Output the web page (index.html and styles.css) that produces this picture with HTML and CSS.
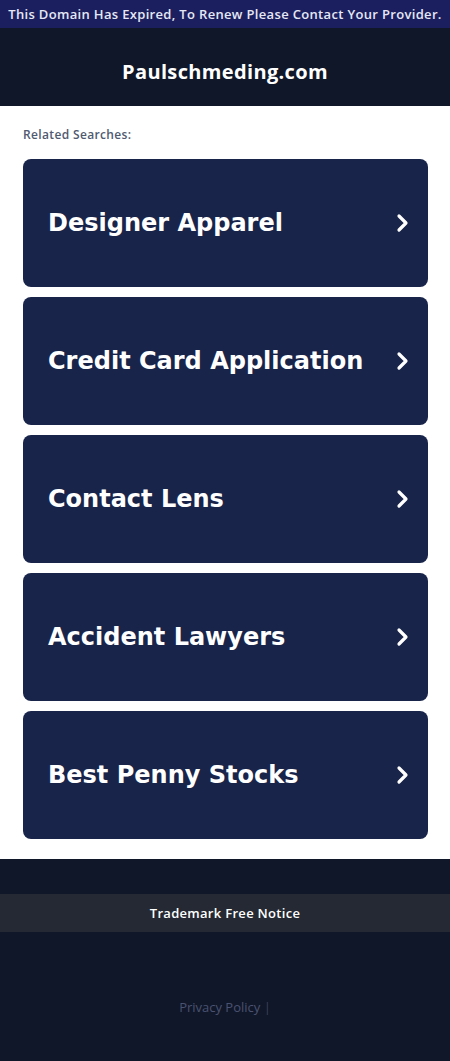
FILE: index.html
```html
<!DOCTYPE html>
<html>
<head>
    <title>Paulschmeding.com</title>
    <link rel="stylesheet" href="styles.css">
</head>
<body>
<div class="expired">This Domain Has Expired, To Renew Please Contact Your Provider.</div>
<div class="header">
    <h1>Paulschmeding.com</h1>
</div>
<div class="content">
    <p class="related">Related Searches:</p>
    <div class="links">
        <a class="link" href="#"><span>Designer Apparel</span><svg class="chev" viewBox="0 0 14 20"><path d="M3 3l7 7-7 7"/></svg></a>
        <a class="link" href="#"><span>Credit Card Application</span><svg class="chev" viewBox="0 0 14 20"><path d="M3 3l7 7-7 7"/></svg></a>
        <a class="link" href="#"><span>Contact Lens</span><svg class="chev" viewBox="0 0 14 20"><path d="M3 3l7 7-7 7"/></svg></a>
        <a class="link" href="#"><span>Accident Lawyers</span><svg class="chev" viewBox="0 0 14 20"><path d="M3 3l7 7-7 7"/></svg></a>
        <a class="link" href="#"><span>Best Penny Stocks</span><svg class="chev" viewBox="0 0 14 20"><path d="M3 3l7 7-7 7"/></svg></a>
    </div>
</div>
<div class="footer">
    <div class="trademark">Trademark Free Notice</div>
    <div class="privacy"><a href="#">Privacy Policy</a> <span class="sep">|</span></div>
</div>
</body>
</html>
```

FILE: styles.css
```css
body {
    margin: 0;
    padding: 0;
    background-color: #101729;
    font-family: 'Open Sans', sans-serif;
}
.expired {
    height: 28px;
    line-height: 29px;
    background-color: #1b1f5f;
    color: #e6e8f5;
    font-size: 13px;
    font-weight: 600;
    letter-spacing: 0.33px;
    text-align: center;
    white-space: nowrap;
}
.header {
    height: 78px;
    background-color: #101729;
    display: flex;
    align-items: center;
    justify-content: center;
}
.header h1 {
    margin: 8px 0 0;
    color: #fff;
    font-size: 20px;
    font-weight: 700;
    letter-spacing: 0.35px;
}
.content {
    background-color: #fff;
    padding: 20px 22px 20px 23px;
}
.related {
    margin: 0 0 16px;
    font-size: 12px;
    color: #4f5a70;
    font-weight: 600;
    letter-spacing: 0.35px;
}
.links {
    display: flex;
    flex-direction: column;
    gap: 10px;
}
.link {
    height: 128px;
    border-radius: 8px;
    background-color: #19244a;
    color: #fff;
    text-decoration: none;
    display: flex;
    align-items: center;
    justify-content: space-between;
    padding: 0 18px 0 25px;
    font-family: 'DejaVu Sans', sans-serif;
    font-weight: bold;
    font-size: 24px;
}
.chev {
    width: 14px;
    height: 20px;
    fill: none;
    stroke: #fff;
    stroke-width: 3.2;
    stroke-linecap: round;
    stroke-linejoin: round;
}
.footer {
    padding-top: 35px;
    padding-bottom: 40px;
}
.trademark {
    background-color: #242933;
    color: #fff;
    height: 38px;
    line-height: 38px;
    text-align: center;
    font-size: 13px;
    font-weight: 600;
    letter-spacing: 0.3px;
}
.privacy {
    margin-top: 66px;
    text-align: center;
    font-size: 13px;
    color: #3a4157;
    line-height: 18px;
}
.privacy a {
    color: #4a5270;
    text-decoration: none;
}
```
